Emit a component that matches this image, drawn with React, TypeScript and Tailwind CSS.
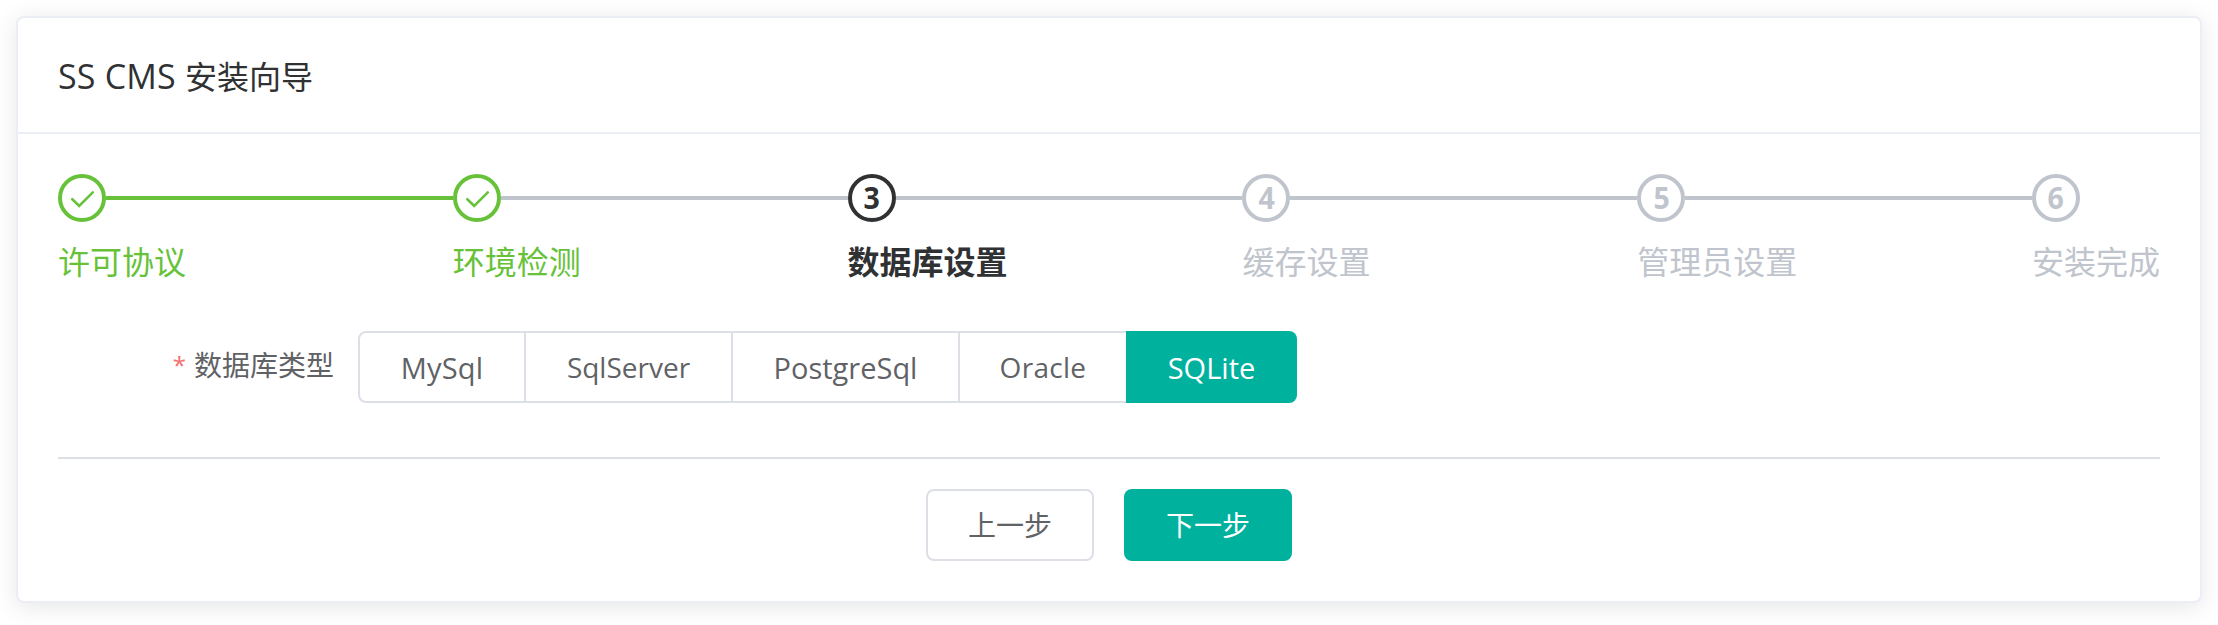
const STEPS = [
  { label: '许可协议', status: 'success', line: 'bg-[#67c23a]' },
  { label: '环境检测', status: 'success', line: 'bg-[#c0c4cc]' },
  { label: '数据库设置', status: 'process', line: 'bg-[#c0c4cc]' },
  { label: '缓存设置', status: 'wait', line: 'bg-[#c0c4cc]' },
  { label: '管理员设置', status: 'wait', line: 'bg-[#c0c4cc]' },
  { label: '安装完成', status: 'wait', line: '' },
];

const STATUS_CLASS: Record<string, string> = {
  success: 'text-[#67c23a]',
  process: 'text-[#303133] font-bold',
  wait: 'text-[#c0c4cc]',
};

const DATABASES = [
  { name: 'MySql', className: 'w-[168px] rounded-l-lg border-2 border-[#dcdfe6] bg-white text-[29px] tracking-[0.2px]' },
  { name: 'SqlServer', className: 'w-[207px] border-2 border-l-0 border-[#dcdfe6] bg-white' },
  { name: 'PostgreSql', className: 'w-[227px] border-2 border-l-0 border-[#dcdfe6] bg-white text-[29px]' },
  { name: 'Oracle', className: 'w-[166px] border-y-2 border-[#dcdfe6] bg-white tracking-[0.3px]' },
  { name: 'SQLite', className: 'w-[171px] rounded-r-lg bg-[#00b19d] text-white text-[29px]' },
];

function Check() {
  return (
    <svg width="48" height="48" viewBox="0 0 48 48" fill="none" className="-m-1 shrink-0">
      <path d="M14.3 25.2 21.2 32 34.8 18.4" stroke="currentColor" strokeWidth="2.6" strokeLinecap="round" strokeLinejoin="miter" />
    </svg>
  );
}

export default function App() {
  return (
    <div className="h-[625px] overflow-hidden bg-white px-4 pt-4 font-['Open_Sans','Noto_Sans_CJK_SC',sans-serif] text-[#606266]">
      <div className="h-[587px] rounded-lg border-2 border-[#ebeef5] bg-white shadow-[0_4px_24px_rgba(0,0,0,0.1)]">
        <header className="flex h-[116px] items-center border-b-2 border-[#ebeef5] px-10 pt-0.5 text-[32px] leading-[48px] text-[#303133]">
          <h1>
            <span className="text-[34px] tracking-[0.2px]">SS CMS </span>安装向导
          </h1>
        </header>
        <main className="px-10 pt-10">
          <ol className="flex">
            {STEPS.map((step, i) => (
              <li key={step.label} className={`${i < 5 ? 'min-w-0 flex-1 basis-0' : 'w-32 shrink-0'} ${STATUS_CLASS[step.status]}`}>
                <div className="flex items-center">
                  <span className="flex size-12 shrink-0 items-center justify-center rounded-full border-4 border-current text-[30px] leading-none font-bold">
                    {step.status === 'success' ? <Check /> : <span className="scale-x-95">{i + 1}</span>}
                  </span>
                  {i < 5 && <span className={`h-1 flex-1 ${step.line}`} />}
                </div>
                <div className="mt-2 text-[32px] leading-[64px] whitespace-nowrap">{step.label}</div>
              </li>
            ))}
          </ol>
          <div className="mt-[37px] flex text-[28px]">
            <div className="flex w-[300px] items-center justify-end pr-6 pb-1 leading-[68px]">
              <span className="mr-2 text-[24px] text-[#f56c6c]">*</span>
              <span>数据库类型</span>
            </div>
            <div className="flex h-[72px]">
              {DATABASES.map((db) => (
                <button key={db.name} className={`flex items-center justify-center leading-none ${db.className}`}>
                  {db.name}
                </button>
              ))}
            </div>
          </div>
          <hr className="mt-[54px] border-t-2 border-[#dcdfe6]" />
          <div className="mt-[30px] flex justify-center gap-[30px] text-[28px]">
            <button className="h-[72px] w-[168px] rounded-lg border-2 border-[#dcdfe6] bg-white leading-[64px]">上一步</button>
            <button className="h-[72px] w-[168px] rounded-lg bg-[#00b19d] leading-[68px] text-white">下一步</button>
          </div>
        </main>
      </div>
    </div>
  );
}
